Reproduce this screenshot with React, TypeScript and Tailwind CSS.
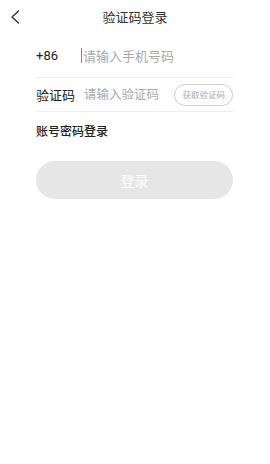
const cjk = { fontFamily: '"Noto Sans CJK SC", "Noto Sans", sans-serif' }

export default function App() {
  return (
    <main className="w-[270px] h-[464px] bg-white text-[#222]" style={cjk}>
      {/* HEADER */}
      <div className="relative h-[34px] flex items-center justify-center">
        <svg className="absolute left-[10px] top-[10px]" width="10" height="14" viewBox="0 0 10 14" fill="none">
          <path d="M8.5 1 L2 7 L8.5 13" stroke="#333" strokeWidth="1.4" strokeLinecap="round" strokeLinejoin="round" />
        </svg>
        <div className="text-[13px] text-[#333]">验证码登录</div>
      </div>

      {/* FORM */}
      <div className="px-[36px] pr-[37px]">
        <div className="h-[44px] flex items-center border-b border-[#eeeeee]">
          <span className="w-[45px] text-[13px] text-[#222]" style={{ fontFamily: 'Roboto, "Noto Sans CJK SC", sans-serif' }}>+86</span>
          <span className="w-px h-[15px] bg-[#5b8bd6]" />
          <span className="text-[13px] text-[#aaa] ml-px">请输入手机号码</span>
        </div>

        <div className="h-[34px] flex items-center border-b border-[#eeeeee]">
          <span className="w-[48px] text-[13px] text-[#222]">验证码</span>
          <span className="flex-1 text-[12.5px] text-[#aaa]">请输入验证码</span>
          <span className="h-[22px] px-[7px] flex items-center rounded-full border border-[#cfcfcf] text-[8.5px] text-[#aaa]">
            获取验证码
          </span>
        </div>

        <div className="mt-[12px] text-[12px] leading-[14px] font-medium text-[#222]">账号密码登录</div>

        <button className="mt-[23px] w-full h-[38px] rounded-full bg-[#e6e6e6] text-white text-[14px]">
          登录
        </button>
      </div>
    </main>
  )
}
